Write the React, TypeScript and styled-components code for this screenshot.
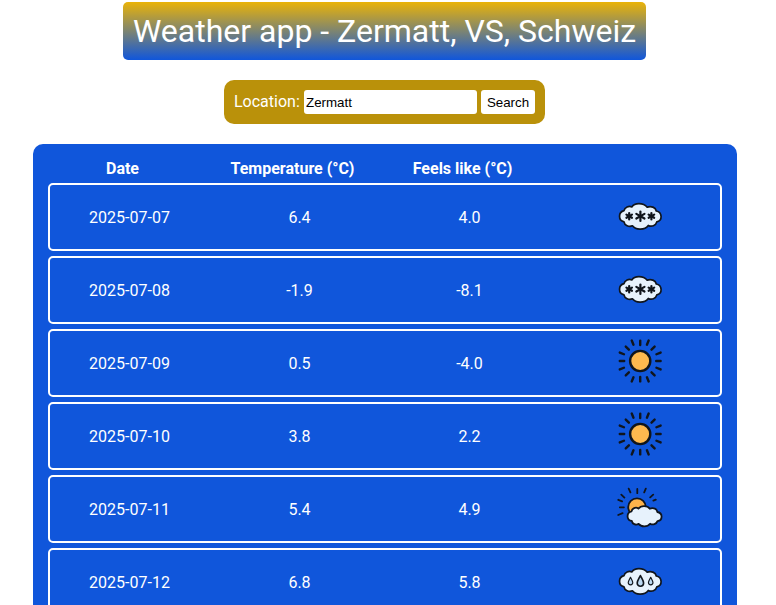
import React from "react";
import styled, { createGlobalStyle } from "styled-components";

const GlobalStyle = createGlobalStyle`
  html { overflow: hidden; background: #fff; }
  body { margin: 0; height: 605px; overflow: hidden; font-family: Roboto, sans-serif; font-size: 16px; }
  * { box-sizing: border-box; }
`;

const Page = styled.main`
  width: 769px;
  padding-top: 2px;
  display: flex;
  flex-direction: column;
  align-items: center;
  gap: 20px;
`;

const Title = styled.h1`
  margin: 0;
  width: 523px;
  height: 58px;
  display: flex;
  align-items: center;
  justify-content: center;
  border-radius: 5px;
  background: linear-gradient(#eab308, #1056db);
  color: #fff;
  font-size: 32px;
  font-weight: 400;
  line-height: 38px;
  white-space: nowrap;
`;

const SearchForm = styled.form`
  width: 321px;
  height: 44px;
  padding: 10px;
  display: flex;
  align-items: center;
  border-radius: 10px;
  background: #ba910a;
  color: #fff;
`;

const Label = styled.label`
  width: 70px;
  white-space: nowrap;
  line-height: 24px;
`;

const LocationInput = styled.input`
  width: 173px;
  height: 24px;
  margin-right: 4px;
  padding: 1px 2px;
  border: 0;
  border-radius: 3px;
  background: #fff;
  color: #000;
  font: 13.333px "Liberation Sans", sans-serif;
`;

const SearchButton = styled.button`
  width: 54px;
  height: 24px;
  padding: 0;
  border: 0;
  border-radius: 3px;
  background: #fff;
  color: #000;
  font: 13.333px "Liberation Sans", sans-serif;
`;

const Forecast = styled.section`
  width: 704px;
  margin-left: 1px;
  padding: 15px;
  border-radius: 10px;
  background: #1056db;
  color: #fff;
`;

const Header = styled.div`
  display: grid;
  grid-template-columns: repeat(4, 170px);
  margin-left: -10.5px;
  height: 24px;
  line-height: 19px;
  font-weight: 700;
  text-align: center;
`;

const Days = styled.div`
  display: grid;
  grid-template-columns: minmax(0, 1fr);
  gap: 5px;
`;

const Day = styled.div`
  height: 68px;
  padding-right: 1px;
  display: grid;
  grid-template-columns: repeat(4, 170px);
  justify-content: center;
  align-items: center;
  justify-items: center;
  border: 2px solid #fff;
  border-radius: 5px;
`;

const Icon = styled.svg`
  display: block;
  width: 60px;
  height: 60px;
`;

const INK = "#10151c";

const CLOUD =
  "M14 23.6 C14.7 20.2 18.8 18.5 22 19.9 C24.3 15.7 33.2 15.4 37.2 20.2 C41 18.6 45.7 20.4 46.3 24 C52.4 25.3 52.8 33.5 46.8 34.9 C45.9 38.7 41.5 40.1 38.3 38.4 C34.8 43.1 26 43.5 22.4 38.8 C18.9 40.3 14.5 38.3 14 34.8 C8 33.6 8.1 25 14 23.6Z";

const Cloud = () => (
  <path d={CLOUD} fill="#e7f2fc" stroke={INK} strokeWidth="1.7" strokeLinejoin="round" />
);

const Flake = ({ x, r }: { x: number; r: number }) => (
  <g stroke={INK} strokeWidth="2.2" strokeLinecap="round">
    {[30, 90, 150].map((a) => (
      <line key={a} x1={x - r} x2={x + r} y1="29.2" y2="29.2" transform={`rotate(${a} ${x} 29.2)`} />
    ))}
  </g>
);

const Drop = ({ x, y, s }: { x: number; y: number; s: number }) => (
  <path
    transform={`translate(${x} ${y}) scale(${s})`}
    d="M0 -5 C1.4 -2.2 2.9 -0.3 2.9 1.8 C2.9 5.6 -2.9 5.6 -2.9 1.8 C-2.9 -0.3 -1.4 -2.2 0 -5Z"
    fill="#bcd9f2"
    stroke={INK}
    strokeWidth="1.5"
    strokeLinejoin="round"
  />
);

const Snow = () => (
  <Icon viewBox="0 0 60 60" fill="none">
    <Cloud />
    <Flake x={19.2} r={3.2} />
    <Flake x={30.4} r={4.7} />
    <Flake x={41.4} r={3.2} />
  </Icon>
);

const Rain = () => (
  <Icon viewBox="0 0 60 60" fill="none">
    <Cloud />
    <Drop x={20.5} y={29.2} s={0.78} />
    <Drop x={30.4} y={29.1} s={1.1} />
    <Drop x={40.7} y={29.2} s={0.78} />
  </Icon>
);

const Sun = () => (
  <Icon viewBox="0 0 60 60" fill="none">
    <g stroke={INK} strokeWidth="2.4" strokeLinecap="round">
      {Array.from({ length: 16 }, (_, i) => {
        const outer = i % 2 === 1;
        return (
          <line
            key={i}
            x1="30.2"
            x2="30.2"
            y1={outer ? 10.4 : 12}
            y2={outer ? 5.9 : 7.6}
            transform={`rotate(${i * 22.5} 30.2 28)`}
          />
        );
      })}
    </g>
    <circle cx="30.2" cy="28" r="10.1" fill="#fdb94f" stroke={INK} strokeWidth="2.4" />
  </Icon>
);

const PartlyCloudy = () => (
  <Icon viewBox="0 0 60 60" fill="none">
    <path
      d="M27.3 10v4.2M18.7 9.6l1.7 3.8M35.8 9.6l-1.6 3.8M11.3 15.6l3.1 3M43.2 15.6l-3 2.8M8.3 20.8l3.8 1.5M45.8 20.6l-2.4 1M9.8 28.3h4.1M8.2 36l4.4-1.8"
      stroke={INK}
      strokeWidth="1.8"
      strokeLinecap="round"
    />
    <circle cx="27" cy="28.1" r="8.8" fill="#fcb34b" stroke={INK} strokeWidth="1.8" />
    <path
      d="M21.6 32.3 C21.8 29.4 25.8 27.6 28.4 29.6 C31 26.1 37.4 26.2 39.8 29.8 C43.3 28 47.3 30.2 47.3 33 C52.9 33.8 53 41.4 47.5 42.1 C46.4 45.1 42.8 46.3 40.1 44.7 C37.3 48.4 31.1 48.1 28.6 44.9 C25.8 46.5 22.2 44.8 21.8 42 C16.2 41.3 16.2 33.3 21.6 32.3Z"
      fill="#e7f2fc"
      stroke={INK}
      strokeWidth="1.8"
      strokeLinejoin="round"
    />
  </Icon>
);

const forecast = [
  { date: "2025-07-07", temperature: "6.4", feelsLike: "4.0", Weather: Snow },
  { date: "2025-07-08", temperature: "-1.9", feelsLike: "-8.1", Weather: Snow },
  { date: "2025-07-09", temperature: "0.5", feelsLike: "-4.0", Weather: Sun },
  { date: "2025-07-10", temperature: "3.8", feelsLike: "2.2", Weather: Sun },
  { date: "2025-07-11", temperature: "5.4", feelsLike: "4.9", Weather: PartlyCloudy },
  { date: "2025-07-12", temperature: "6.8", feelsLike: "5.8", Weather: Rain },
];

export default function App() {
  return (
    <>
      <GlobalStyle />
      <Page>
        <Title>Weather app - Zermatt, VS, Schweiz</Title>
        <SearchForm onSubmit={(e) => e.preventDefault()}>
          <Label htmlFor="location">Location:</Label>
          <LocationInput id="location" defaultValue="Zermatt" />
          <SearchButton type="submit">Search</SearchButton>
        </SearchForm>
        <Forecast>
          <Header>
            <span>Date</span>
            <span>Temperature (°C)</span>
            <span>Feels like (°C)</span>
          </Header>
          <Days>
            {forecast.map(({ date, temperature, feelsLike, Weather }) => (
              <Day key={date}>
                <span>{date}</span>
                <span>{temperature}</span>
                <span>{feelsLike}</span>
                <Weather />
              </Day>
            ))}
          </Days>
        </Forecast>
      </Page>
    </>
  );
}
